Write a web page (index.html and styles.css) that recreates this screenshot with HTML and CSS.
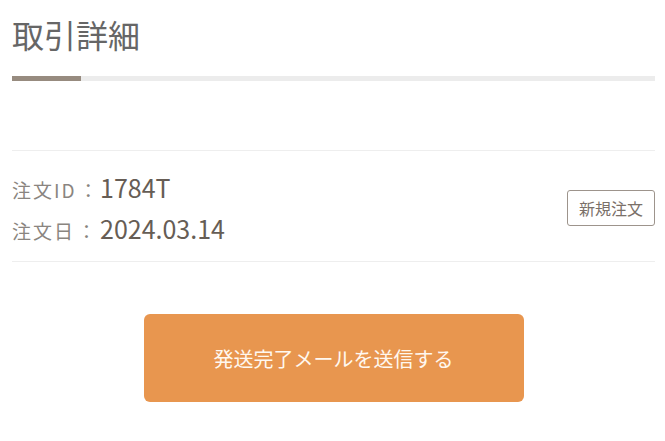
FILE: index.html
```html
<!DOCTYPE html>
<html lang="ja">
<head>
    <meta charset="UTF-8">
    <meta name="viewport" content="width=device-width, initial-scale=1.0">
    <title>取引詳細</title>
    <link rel="stylesheet" href="styles.css">
</head>
<body>
    <div class="page">
        <h1 class="page-title">取引詳細</h1>
        <div class="progress">
            <div class="progress-fill"></div>
        </div>

        <div class="order">
            <div class="order-info">
                <div class="order-row">
                    <span class="order-label">注文ID<span class="colon">：</span></span>
                    <span class="order-value">1784T</span>
                </div>
                <div class="order-row">
                    <span class="order-label">注文日<span class="colon">：</span></span>
                    <span class="order-value">2024.03.14</span>
                </div>
            </div>
            <span class="badge">新規注文</span>
        </div>

        <div class="actions">
            <button class="btn-send">発送完了メールを送信する</button>
        </div>
    </div>
</body>
</html>
```

FILE: styles.css
```css
body {
    margin: 0;
    background: #fff;
    font-family: "Noto Sans CJK JP", "Noto Sans", sans-serif;
}

.page {
    padding: 0 10px 0 12px;
}

.page-title {
    margin: 0;
    padding-top: 12px;
    font-size: 32px;
    font-weight: 400;
    line-height: 44px;
    color: #666;
}

.progress {
    margin-top: 20px;
    height: 5px;
    background: #ececec;
}

.progress-fill {
    width: 69px;
    height: 100%;
    background: #978b7f;
}

.order {
    display: flex;
    align-items: center;
    justify-content: space-between;
    margin-top: 69px;
    padding: 16px 0 12px;
    border-top: 1px solid #eee;
    border-bottom: 1px solid #eee;
}

.order-row {
    display: flex;
    align-items: baseline;
    height: 41px;
    line-height: 41px;
}

.order-label {
    font-size: 19px;
    letter-spacing: 2px;
    color: #8a8580;
    width: 88px;
    white-space: nowrap;
}

.colon {
    margin-left: 2px;
    letter-spacing: 0;
}

.order-value {
    font-size: 25px;
    color: #665d55;
}

.badge {
    border: 1px solid #9d948c;
    border-radius: 3px;
    padding: 6px 11px;
    font-size: 16px;
    line-height: 22px;
    color: #7a7069;
}

.actions {
    display: flex;
    justify-content: center;
    padding-top: 52px;
}

.btn-send {
    width: 380px;
    height: 88px;
    border: none;
    border-radius: 6px;
    background: #e8964f;
    color: #fff8ef;
    font-family: "Noto Sans CJK JP", sans-serif;
    font-size: 20px;
}
```
